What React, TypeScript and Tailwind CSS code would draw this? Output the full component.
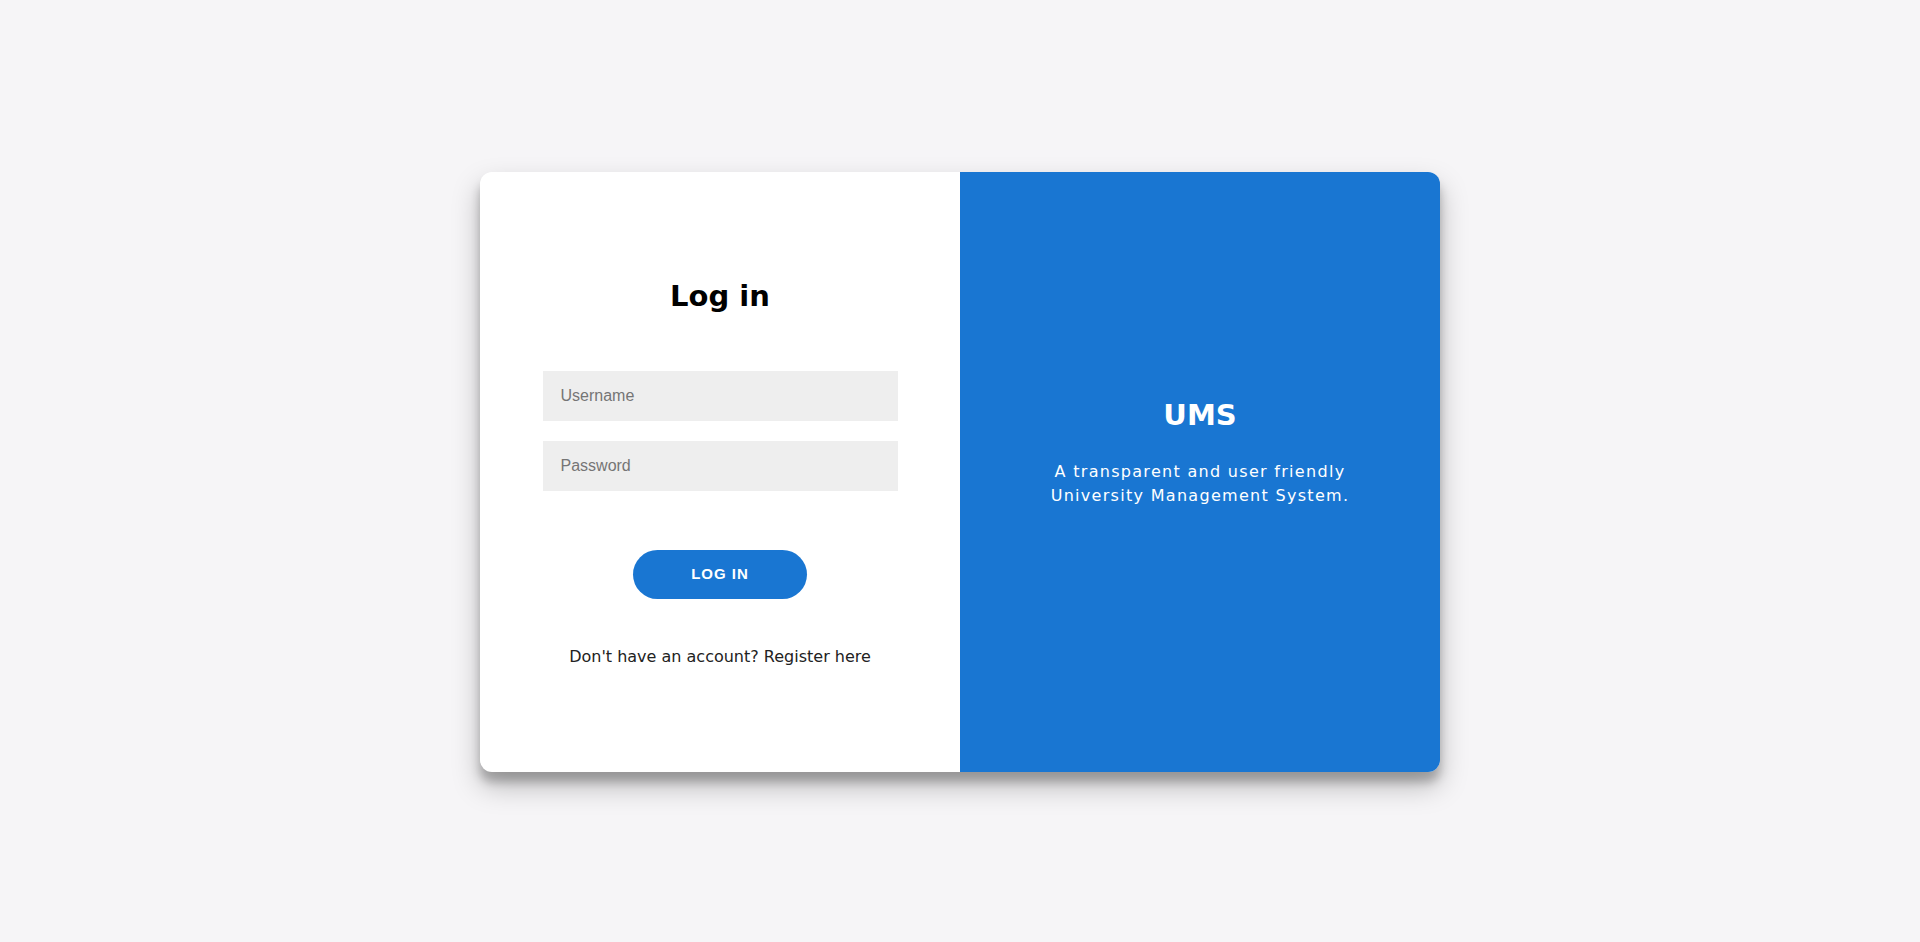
export default function App() {
  return (
    <div className="min-h-screen bg-[#f6f5f7] flex items-center justify-center pt-[2px] font-['DejaVu_Sans',sans-serif]">
      <div className="w-[960px] h-[600px] flex rounded-[12px] overflow-hidden bg-white shadow-[0_14px_28px_rgba(0,0,0,0.25),0_10px_10px_rgba(0,0,0,0.22)]">
        {/* form side */}
        <div className="w-1/2 flex flex-col items-center pt-[106px]">
          <h1 className="text-[29px] leading-[36px] font-bold text-black">Log in</h1>
          <input
            type="text"
            placeholder="Username"
            className="mt-[57px] w-[355px] h-[50px] bg-[#eeeeee] px-[18px] text-[16px] font-['Liberation_Sans',sans-serif] placeholder:text-[#757575] outline-none"
          />
          <input
            type="password"
            placeholder="Password"
            className="mt-[20px] w-[355px] h-[50px] bg-[#eeeeee] px-[18px] text-[16px] font-['Liberation_Sans',sans-serif] placeholder:text-[#757575] outline-none"
          />
          <button className="mt-[59px] w-[174px] h-[49px] rounded-full bg-[#1976d2] text-white text-[15px] font-bold tracking-[1px] uppercase font-['Liberation_Sans',sans-serif]">
            Log in
          </button>
          <p className="mt-[46px] text-[16px] leading-6 text-[#222]">Don't have an account? Register here</p>
        </div>

        {/* info side */}
        <div className="w-1/2 bg-[#1976d2] flex flex-col items-center pt-[225px] text-white text-center">
          <h2 className="text-[29px] leading-[36px] font-bold">UMS</h2>
          <p className="mt-[27px] text-[16px] leading-[24px] tracking-[1.3px]">
            A transparent and user friendly
            <br />
            University Management System.
          </p>
        </div>
      </div>
    </div>
  );
}
